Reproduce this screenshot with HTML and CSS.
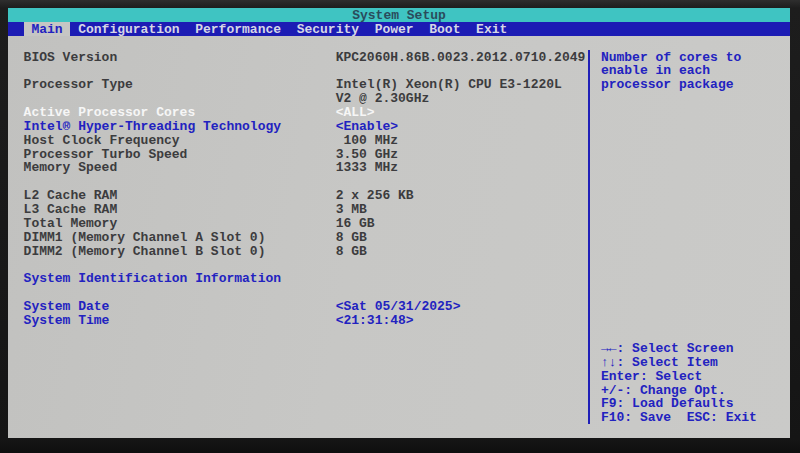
FILE: index.html
```html
<!DOCTYPE html>
<html lang="en">
<head>
<meta charset="utf-8">
<title>System Setup</title>
<link rel="stylesheet" href="styles.css">
</head>
<body>
<div class="bezel">
  <div class="screen">
    <div class="title">System Setup</div>
    <nav class="tabs">
      <span class="tab active">Main</span>
      <span class="tab">Configuration</span>
      <span class="tab">Performance</span>
      <span class="tab">Security</span>
      <span class="tab">Power</span>
      <span class="tab">Boot</span>
      <span class="tab">Exit</span>
    </nav>
    <div class="body">
      <section class="main">
        <div class="row"><span>BIOS Version</span><span>KPC2060H.86B.0023.2012.0710.2049</span></div>
        <div class="blank"></div>
        <div class="row"><span>Processor Type</span><span>Intel(R) Xeon(R) CPU E3-1220L</span></div>
        <div class="row"><span></span><span>V2 @ 2.30GHz</span></div>
        <div class="row selected"><span>Active Processor Cores</span><span>&lt;ALL&gt;</span></div>
        <div class="row option"><span>Intel® Hyper-Threading Technology</span><span>&lt;Enable&gt;</span></div>
        <div class="row"><span>Host Clock Frequency</span><span> 100 MHz</span></div>
        <div class="row"><span>Processor Turbo Speed</span><span>3.50 GHz</span></div>
        <div class="row"><span>Memory Speed</span><span>1333 MHz</span></div>
        <div class="blank"></div>
        <div class="row"><span>L2 Cache RAM</span><span>2 x 256 KB</span></div>
        <div class="row"><span>L3 Cache RAM</span><span>3 MB</span></div>
        <div class="row"><span>Total Memory</span><span>16 GB</span></div>
        <div class="row"><span>DIMM1 (Memory Channel A Slot 0)</span><span>8 GB</span></div>
        <div class="row"><span>DIMM2 (Memory Channel B Slot 0)</span><span>8 GB</span></div>
        <div class="blank"></div>
        <div class="row option"><span>System Identification Information</span><span></span></div>
        <div class="blank"></div>
        <div class="row option"><span>System Date</span><span>&lt;Sat 05/31/2025&gt;</span></div>
        <div class="row option"><span>System Time</span><span>&lt;21:31:48&gt;</span></div>
      </section>
      <div class="divider"></div>
      <aside class="help">
        <div class="help-text">
          <div class="line">Number of cores to</div>
          <div class="line">enable in each</div>
          <div class="line">processor package</div>
        </div>
        <div class="keys">
          <div class="line">→←: Select Screen</div>
          <div class="line">↑↓: Select Item</div>
          <div class="line">Enter: Select</div>
          <div class="line">+/-: Change Opt.</div>
          <div class="line">F9: Load Defaults</div>
          <div class="line">F10: Save  ESC: Exit</div>
        </div>
      </aside>
    </div>
  </div>
</div>
</body>
</html>
```

FILE: styles.css
```css
:root {
  --row: 13.87px;
  --text-line: 15.87px;
  --grey: #c6c6c4;
  --ink: #3c3c3e;
  --blue: #2222c0;
  --bar: #1c1cb4;
  --teal: #3fc4c2;
}

* { box-sizing: border-box; }

html, body {
  margin: 0;
  padding: 0;
}

body {
  width: 800px;
  height: 453px;
  overflow: hidden;
  background: #141414;
}

/* monitor frame around the panel */
.bezel {
  width: 800px;
  height: 453px;
  padding: 8px 10px 15px 8px;
  background: linear-gradient(180deg, #2e2e2e 0px, #1d1d1d 8px, #151515 440px, #0e0e0e 453px);
}

.screen {
  width: 782px;
  height: 430px;
  display: flex;
  flex-direction: column;
  background: linear-gradient(100deg, #c1c1bf 0%, #c7c7c5 45%, #cacac8 100%);
  font-family: "Liberation Mono", "DejaVu Sans Mono", monospace;
  font-weight: bold;
  font-size: 13px;
  line-height: var(--row);
  color: var(--ink);
}

/* every text cell is one character row tall; the taller line box
   drops the glyphs a pixel lower inside the cell */
.title,
.tab,
.row span,
.line {
  height: var(--row);
  line-height: var(--text-line);
  white-space: pre;
}

.title {
  background: var(--teal);
  color: #2a4c5c;
  text-align: center;
}

.tabs {
  height: var(--row);
  display: flex;
  background: var(--bar);
  padding-left: 2ch;
  color: #d6d6e6;
}

.tab {
  padding: 0 1ch;
}

.tab.active {
  background: var(--grey);
  color: var(--blue);
}

.body {
  flex: 1;
  display: flex;
}

.main {
  width: 74ch;
  padding: var(--row) 0 0 2ch;
  display: flex;
  flex-direction: column;
}

.row {
  display: grid;
  grid-template-columns: 40ch 1fr;
  height: var(--row);
}

.blank {
  height: var(--row);
}

.row.selected {
  color: #f6f6f6;
}

.row.option {
  color: var(--blue);
}

.divider {
  width: 1ch;
  margin: var(--row) 0 var(--row);
  display: flex;
  justify-content: center;
}

.divider::before {
  content: "";
  width: 2px;
  background: #2020b8;
}

.help {
  flex: 1;
  padding: var(--row) 0 var(--row) 1ch;
  display: flex;
  flex-direction: column;
  justify-content: space-between;
  color: var(--blue);
}
```
